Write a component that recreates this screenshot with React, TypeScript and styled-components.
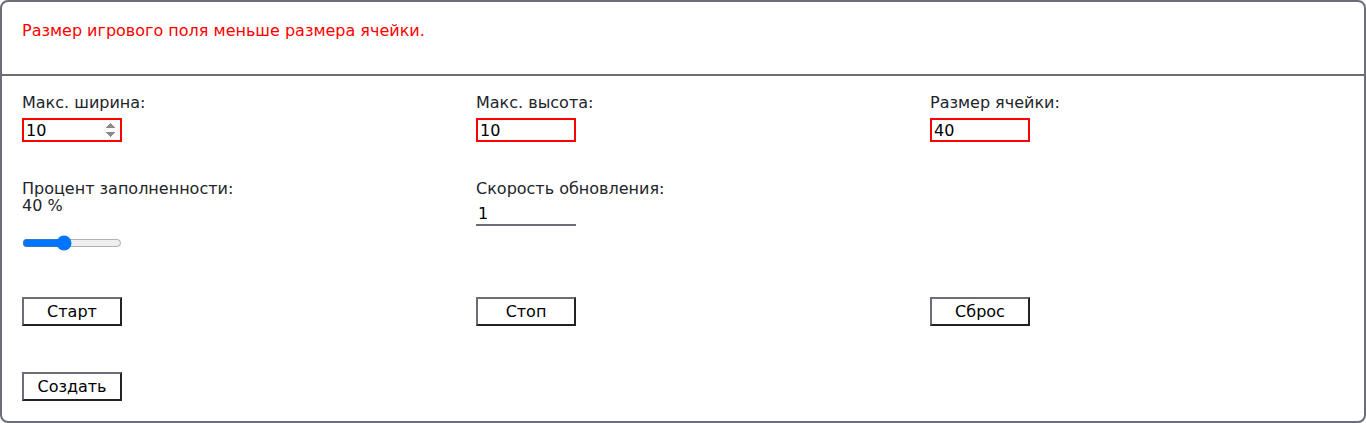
import React from "react";
import styled, { createGlobalStyle } from "styled-components";

const Global = createGlobalStyle`
  html, body { margin: 0; padding: 0; background: #fff; }
  body { font-family: "DejaVu Sans", sans-serif; font-size: 16px; }
  input[type=number]::-webkit-inner-spin-button,
  input[type=number]::-webkit-outer-spin-button { opacity: 1; }
`;

const Frame = styled.div`
  box-sizing: border-box;
  width: 1366px;
  height: 423px;
  border: 2px solid #6b6e78;
  border-radius: 8px;
  display: flex;
  flex-direction: column;
`;

const Header = styled.div`
  box-sizing: border-box;
  height: 74px;
  padding: 20px 20px 0;
  border-bottom: 2px solid #6b6e78;
  color: #ff0000;
  line-height: 17px;
`;

const Body = styled.div`
  display: grid;
  grid-template-columns: repeat(3, 1fr);
  grid-template-rows: 86px 117px 75px auto;
  flex: 1;
`;

const Cell = styled.div`
  padding: 18px 0 0 20px;
  display: flex;
  flex-direction: column;
  align-items: flex-start;
`;

const Label = styled.div`
  color: #212529;
  line-height: 17px;
`;

const Value = styled.div`
  color: #212529;
  line-height: 17px;
`;

const Field = styled.input<{ $under?: boolean }>`
  box-sizing: border-box;
  width: 100px;
  height: 24px;
  margin-top: ${(p) => (p.$under ? "5px" : "7px")};
  padding: 1px 2px;
  font-family: "DejaVu Sans", sans-serif;
  font-size: 16px;
  color: #000;
  background: #fff;
  outline: none;
  border: ${(p) => (p.$under ? "none" : "2px solid #ff0000")};
  border-bottom: 2px solid ${(p) => (p.$under ? "#6b6e78" : "#ff0000")};
  border-radius: 0;
`;

const Range = styled.input`
  width: 100px;
  margin: 21px 0 0;
`;

const Button = styled.button`
  box-sizing: border-box;
  width: 100px;
  height: 29px;
  padding: 0;
  font-family: "DejaVu Sans", sans-serif;
  font-size: 16px;
  color: #000;
  background: #fff;
  border-style: solid;
  border-width: 2px;
  border-color: #6b6e78 #222 #222 #6b6e78;
  border-radius: 0;
`;

export default function App() {
  return (
    <>
      <Global />
      <Frame>
        <Header>Размер игрового поля меньше размера ячейки.</Header>
        <Body>
          <Cell>
            <Label>Макс. ширина:</Label>
            <Field type="number" defaultValue={10} />
          </Cell>
          <Cell>
            <Label>Макс. высота:</Label>
            <Field type="text" defaultValue="10" />
          </Cell>
          <Cell>
            <Label>Размер ячейки:</Label>
            <Field type="text" defaultValue="40" />
          </Cell>

          <Cell>
            <Label>Процент заполненности:</Label>
            <Value>40 %</Value>
            <Range type="range" min={0} max={100} defaultValue={40} />
          </Cell>
          <Cell>
            <Label>Скорость обновления:</Label>
            <Field $under type="text" defaultValue="1" />
          </Cell>
          <Cell />

          <Cell>
            <Button>Старт</Button>
          </Cell>
          <Cell>
            <Button>Стоп</Button>
          </Cell>
          <Cell>
            <Button>Сброс</Button>
          </Cell>

          <Cell>
            <Button>Создать</Button>
          </Cell>
          <Cell />
          <Cell />
        </Body>
      </Frame>
    </>
  );
}
